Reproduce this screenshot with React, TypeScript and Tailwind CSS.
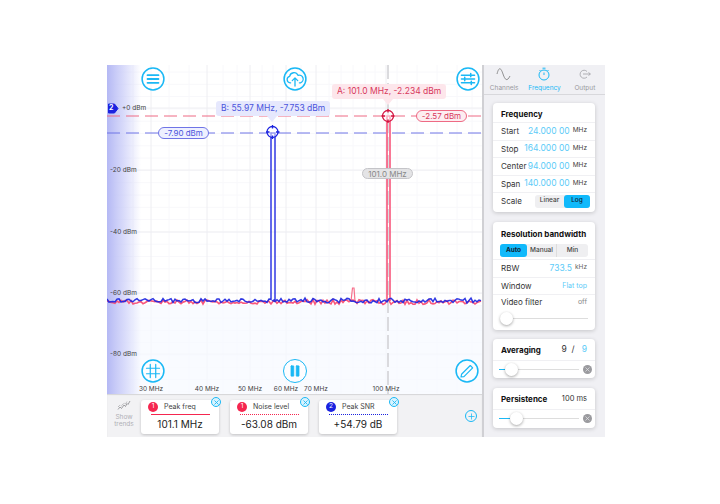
import { Pause, Plus, X } from 'lucide-react';

const CYAN = '#1ab8f5';
const RED = '#f5264f';
const BLUE = '#1a22e0';

// cheap repeatable noise for the traces
function noise(seed: number, i: number) {
  const v = Math.sin(i * 12.9898 + seed * 78.233) * 43758.5453;
  return v - Math.floor(v) - 0.5;
}

function tracePath(seed: number, base: number, peakX: number, peakY: number, peakW: number) {
  let d = '';
  for (let x = 0; x <= 375; x += 2) {
    const amp = x > 190 ? 5 : 4;
    const y = base + noise(seed, x) * amp;
    if (x === peakX) {
      d += `L${x} ${y.toFixed(1)} L${x} ${peakY} L${x + peakW} ${peakY} L${x + peakW} ${y.toFixed(1)} `;
    } else {
      d += `${d ? 'L' : 'M'}${x} ${y.toFixed(1)} `;
    }
  }
  return d;
}

const minorX = [6, 26, 62, 82, 116, 130, 155, 166, 194, 222, 234, 246, 258, 268, 290, 310, 330, 350, 365];
const majorX = [44, 100, 143, 179, 209, 279];
const majorY = [43, 105, 167, 228, 289];

function RoundButton({ left, top, children }: { left: number; top: number; children: React.ReactNode }) {
  return (
    <svg className="absolute" style={{ left, top }} width="24" height="24" viewBox="0 0 22 22" fill="none" stroke={CYAN}>
      <circle cx="11" cy="11" r="10" fill="#ffffff" fillOpacity="0.6" strokeWidth="1.4" />
      {children}
    </svg>
  );
}

function Chart() {
  return (
    <div className="relative h-[329px] w-full overflow-hidden bg-white">
      <svg className="absolute inset-0" width="375" height="329" viewBox="0 0 375 329">
        <defs>
          <linearGradient id="edge" x1="0" x2="1" y1="0" y2="0">
            <stop offset="0" stopColor="#b4b8f4" />
            <stop offset="0.45" stopColor="#c8cbf8" stopOpacity="0.75" />
            <stop offset="1" stopColor="#c8cbf8" stopOpacity="0" />
          </linearGradient>
        </defs>
        {minorX.map(x => <line key={x} x1={x} x2={x} y1="0" y2="329" stroke="#f8f8fb" strokeWidth="1" />)}
        {Array.from({ length: 32 }, (_, i) => i * 12.3 + 7).map(y => (
          <line key={y} x1="0" x2="375" y1={y} y2={y} stroke="#f8f8fb" strokeWidth="1" />
        ))}
        {majorX.map(x => <line key={x} x1={x} x2={x} y1="0" y2="329" stroke="#eeeef2" strokeWidth="1" />)}
        {majorY.map(y => <line key={y} x1="0" x2="375" y1={y} y2={y} stroke="#eeeef2" strokeWidth="1" />)}
        <rect x="0" y="240" width="375" height="89" fill="#f7f9ff" opacity="0.7" />
        <rect x="0" y="0" width="34" height="329" fill="url(#edge)" />
        <line x1="281" x2="281" y1="0" y2="329" stroke="#d0d0d4" strokeWidth="1.5" strokeDasharray="14 4" />
        <line x1="0" x2="375" y1="51" y2="51" stroke="#ee6a84" strokeWidth="1" strokeDasharray="13 6" />
        <line x1="0" x2="375" y1="68" y2="68" stroke="#6f74e6" strokeWidth="1" strokeDasharray="13 6" />
        <path d="M244 236 L245.500 223 L247 223 L248 236" fill="none" stroke="#f7708c" strokeWidth="1.2" />
        <path d={tracePath(3, 237, 280, 51, 3)} fill="none" stroke="#f8577c" strokeWidth="1.6" />
        <path d={tracePath(7, 235.5, 164, 68, 4)} fill="none" stroke={BLUE} strokeOpacity="0.9" strokeWidth="1.5" />
        <g fill="none" stroke={BLUE} strokeWidth="1.3">
          <circle cx="165.5" cy="67" r="5.5" fill="#ffffff" fillOpacity="0.5" />
          <path d="M165.5 60v3.5M165.5 70.5v3.5M159 67h3.5M169 67h3.5" />
        </g>
        <g fill="none" stroke="#d3123f" strokeWidth="1.3">
          <circle cx="281" cy="51" r="5.5" fill="#ffffff" fillOpacity="0.5" />
          <path d="M281 44v3.5M281 54.5v3.5M274.5 51h3.5M284 51h3.5" />
        </g>
        <path d="M1.5 39h6l3.5 4.5-3.5 4.500h-6z" fill={BLUE} stroke={BLUE} strokeLinejoin="round" />
      </svg>

      {[
        ['+0 dBm', 38],
        ['-20 dBm', 100],
        ['-40 dBm', 162],
        ['-60 dBm', 223],
        ['-80 dBm', 284],
      ].map(([label, top]) => (
        <span
          key={label}
          className={`absolute text-[6.5px] leading-[10px] text-[#444] ${label === '+0 dBm' ? 'left-[15px]' : 'left-[3px]'}`}
          style={{ top: Number(top) }}
        >
          {label}
        </span>
      ))}
      {[
        ['30 MHz', 44],
        ['40 MHz', 100],
        ['50 MHz', 143],
        ['60 MHz', 179],
        ['70 MHz', 209],
        ['100 MHz', 279],
      ].map(([label, left]) => (
        <span key={label} className="absolute top-[319px] -translate-x-1/2 whitespace-nowrap text-[6.5px] leading-[10px] text-[#444]" style={{ left: Number(left) }}>
          {label}
        </span>
      ))}

      <span className="absolute left-[2px] top-[38px] text-[7px] font-bold leading-[10px] text-white">2</span>

      <div className="absolute left-[109px] top-[36px] flex h-[15px] items-center whitespace-nowrap rounded-[3px] bg-[#e6e8fd] px-[5px] text-[8.5px] text-[#4a54dc]">B: 55.97 MHz, -7.753 dBm</div>
      <div className="absolute left-[160px] top-[51px] h-0 w-0 border-x-[5px] border-t-[6px] border-x-transparent border-t-[#e6e8fd]" />
      <div className="absolute left-[225px] top-[19px] flex h-[15px] items-center whitespace-nowrap rounded-[3px] bg-[#fde6eb] px-[5px] text-[8.5px] text-[#d8385c]">A: 101.0 MHz, -2.234 dBm</div>
      <div className="absolute left-[276px] top-[34px] h-0 w-0 border-x-[5px] border-t-[6px] border-x-transparent border-t-[#fde6eb]" />

      <div className="absolute left-[51px] top-[62px] flex h-[12px] w-[51px] items-center justify-center rounded-full border border-[#6f74e6] bg-[#eef0ff] text-[8px] text-[#4a54dc]">-7.90 dBm</div>
      <div className="absolute left-[309px] top-[45px] flex h-[12px] w-[51px] items-center justify-center rounded-full border border-[#ee6a84] bg-[#fdeef1] text-[8px] text-[#d8385c]">-2.57 dBm</div>
      <div className="absolute left-[255px] top-[103px] flex h-[11px] w-[51px] items-center justify-center rounded-full border border-[#c4c4c8] bg-[#e4e4e6] text-[8px] text-[#888]">101.0 MHz</div>

      <RoundButton left={34} top={2}>
        <path d="M6 7.500h10M6 11h10M6 14.500h10" strokeWidth="1.7" strokeLinecap="round" />
      </RoundButton>
      <RoundButton left={176} top={2}>
        <path d="M7 14.500H6.500a3 3 0 0 1-.4-5.900 4 4 0 0 1 7.600-1 3.200 3.200 0 0 1 2.300 6.900H15M11 17.500v-7M8.500 12.500 11 10l2.500 2.500" strokeWidth="1.200" strokeLinecap="round" strokeLinejoin="round" />
      </RoundButton>
      <RoundButton left={349} top={2}>
        <path d="M5 7.500h12M5 11h12M5 14.500h12M13.500 6v3M8 9.500v3M14 13v3" strokeWidth="1.400" strokeLinecap="round" />
      </RoundButton>
      <RoundButton left={34} top={294}>
        <path d="M8.500 5v12M13.500 5v12M5 8.500h12M5 13.500h12" strokeWidth="1.100" strokeLinecap="round" />
      </RoundButton>
      <div className="absolute left-[176px] top-[294px] flex h-[24px] w-[24px] items-center justify-center rounded-full border-[1.5px] border-[#1ab8f5] bg-white/60">
        <Pause size={14} fill={CYAN} stroke={CYAN} strokeWidth={1} />
      </div>
      <RoundButton left={348} top={294}>
        <path d="m6 14 8-8 2.200 2.200-8 8L5.500 16.500Z" strokeWidth="1.100" strokeLinejoin="round" />
      </RoundButton>
    </div>
  );
}

function MeasureCard({ num, title, value, color, dotted }: { num: string; title: string; value: string; color: string; dotted?: boolean }) {
  return (
    <div className="relative flex h-[34px] w-[78px] flex-col items-center rounded-[3px] bg-white pt-[1px] shadow-[0_1px_3px_rgba(0,0,0,0.2)]">
      <div className="flex w-full items-center pl-[7px]">
        <span className="flex h-[10px] w-[10px] items-center justify-center rounded-full text-[6.5px] text-white" style={{ backgroundColor: color }}>{num}</span>
        <span className="ml-[6px] whitespace-nowrap text-[7px] leading-[12px] text-[#444]">{title}</span>
      </div>
      <div
        className={`mt-[1px] w-[59px] border-t ${dotted ? 'border-dotted' : 'border-solid'}`}
        style={{ borderColor: color }}
      />
      <span className="mt-[3px] whitespace-nowrap text-[10px] leading-[13px] text-[#222]">{value}</span>
      <span className="absolute -right-[2px] -top-[3px] flex h-[10px] w-[10px] items-center justify-center rounded-full border border-[#1ab8f5] bg-[#d9f3fe]">
        <X size={7} stroke={CYAN} strokeWidth={3} />
      </span>
    </div>
  );
}

function BottomBar() {
  return (
    <div className="flex h-[43px] items-start bg-[#f2f2f4] pt-[6px] shadow-[inset_0_1px_1px_rgba(0,0,0,0.12)]">
      <div className="flex w-[34px] flex-col items-center">
        <svg width="14" height="11" viewBox="0 0 14 11" fill="none" stroke="#8a8a8e" strokeWidth="0.8">
          <path d="M1 9.500 3 7l1.500 1.500L7 5l1.500 1.500L10 3.500l1 1L13 1" />
          <path d="M1 7 3 5l1.500 1L7 3l1.500 1L10 1.500" strokeDasharray="1 1" />
        </svg>
        <span className="mt-[3px] text-center text-[6.5px] leading-[7px] text-[#b0b0b4]">Show<br />trends</span>
      </div>
      <div className="flex gap-[11px]">
        <MeasureCard num="1" title="Peak freq" value="101.1 MHz" color={RED} />
        <MeasureCard num="1" title="Noise level" value="-63.08 dBm" color={RED} dotted />
        <MeasureCard num="2" title="Peak SNR" value="+54.79 dB" color={BLUE} dotted />
      </div>
      <span className="ml-[68px] mt-[10px] flex h-[12px] w-[12px] items-center justify-center rounded-full border border-[#1ab8f5]">
        <Plus size={9} stroke={CYAN} strokeWidth={2} />
      </span>
    </div>
  );
}

function Row({ label, value, unit }: { label: string; value: string; unit: string }) {
  return (
    <div className="flex h-[17.5px] items-center whitespace-nowrap border-t border-[#f0f0f3] px-[8px] text-[8px] text-[#333]">
      <span className="flex-1">{label}</span>
      <span className="text-[8.5px] text-[#5ccbf8]">{value}</span>
      <span className="ml-[3px] text-[6.5px] text-[#444]">{unit}</span>
    </div>
  );
}

function Slider({ fill, thumb }: { fill: number; thumb: number }) {
  return (
    <div className="flex h-[18px] items-center border-t border-[#f0f0f3] pl-[6px] pr-[3px]">
      <div className="relative h-[1px] flex-1 bg-[#ddd]">
        <div className="absolute left-0 top-0 h-[1px] bg-[#1ab8f5]" style={{ width: fill }} />
        <div className="absolute top-[-6px] h-[13px] w-[13px] rounded-full bg-white shadow-[0_1px_3px_rgba(0,0,0,0.35)]" style={{ left: thumb }} />
      </div>
      <span className="ml-[4px] flex h-[9px] w-[9px] items-center justify-center rounded-full bg-[#9a9a9e]">
        <X size={7} stroke="#e4e4e6" strokeWidth={2.5} />
      </span>
    </div>
  );
}

function Card({ className, children }: { className: string; children: React.ReactNode }) {
  return <div className={`ml-[9px] w-[102px] rounded-[4px] bg-white shadow-[0_1px_4px_rgba(0,0,0,0.18)] ${className}`}>{children}</div>;
}

function Sidebar() {
  return (
    <div className="flex h-[372px] w-[123px] flex-col border-l-[2px] border-[#d0d0d4] bg-[#f0f0f4]">
      <div className="flex h-[30px] items-start border-b border-[#d8d8dc] pt-[2px]">
        <div className="flex flex-1 flex-col items-center text-[6.5px] text-[#9a9a9e]">
          <svg width="16" height="14" viewBox="0 0 16 14" fill="none" stroke="#777" strokeWidth="0.8">
            <path d="M1 7C3 -1 5 1 7 7s4 8 7 2" />
          </svg>
          <span className="mt-[3px]">Channels</span>
        </div>
        <div className="flex flex-1 flex-col items-center text-[6.5px] text-[#1ab8f5]">
          <svg width="14" height="14" viewBox="0 0 14 14" fill="none" stroke={CYAN} strokeWidth="1">
            <circle cx="7" cy="8" r="5" />
            <path d="M5.500 1.200h3M7 5.500V8M2.500 3l1 1M11.500 3l-1 1" />
          </svg>
          <span className="mt-[3px]">Frequency</span>
        </div>
        <div className="flex flex-1 flex-col items-center text-[6.5px] text-[#9a9a9e]">
          <svg width="16" height="14" viewBox="0 0 16 14" fill="none" stroke="#a0a0a4" strokeWidth="0.8">
            <path d="M10 4.500A4 4 0 1 0 10 10M6 7h7M11.500 5.500 13.500 7l-2 1.500" />
          </svg>
          <span className="mt-[3px]">Output</span>
        </div>
      </div>

      <Card className="mt-[8px] h-[109px]">
        <div className="flex h-[19px] items-center pl-[8px] pt-[3px] text-[8px] font-bold text-[#111]">Frequency</div>
        <Row label="Start" value="24.000 00" unit="MHz" />
        <Row label="Stop" value="164.000 00" unit="MHz" />
        <Row label="Center" value="94.000 00" unit="MHz" />
        <Row label="Span" value="140.000 00" unit="MHz" />
        <div className="flex h-[17.5px] items-center justify-between border-t border-[#f0f0f3] pl-[8px] pr-[5px] text-[8px] text-[#333]">
          <span>Scale</span>
          <div className="flex h-[13px] w-[55px] rounded-[3px] bg-[#efeff1] text-[6.5px] font-medium">
            <span className="flex w-[29px] items-center justify-center text-[#444]">Linear</span>
            <span className="flex w-[26px] items-center justify-center rounded-[3px] bg-[#10b9fb] text-[#123]">Log</span>
          </div>
        </div>
      </Card>

      <Card className="mt-[10px] h-[108px]">
        <div className="flex h-[22px] items-center whitespace-nowrap pl-[8px] pt-[1px] text-[8px] font-bold text-[#111]">Resolution bandwidth</div>
        <div className="px-[7px]">
          <div className="flex h-[13px] rounded-[3px] bg-[#efeff1] text-[6.5px] font-medium text-[#444]">
            <span className="flex w-[27px] items-center justify-center rounded-[3px] bg-[#10b9fb] font-bold text-[#123]">Auto</span>
            <span className="flex w-[30px] items-center justify-center border-r border-[#ddd]">Manual</span>
            <span className="flex flex-1 items-center justify-center">Min</span>
          </div>
        </div>
        <div className="mt-[2px] flex h-[17.5px] items-center border-t border-[#f0f0f3] px-[8px] text-[8px] text-[#333]">
          <span className="flex-1">RBW</span>
          <span className="text-[8.5px] text-[#5ccbf8]">733.5</span>
          <span className="ml-[3px] text-[6.5px] text-[#666]">kHz</span>
        </div>
        <div className="flex h-[17.5px] items-center justify-between border-t border-[#f0f0f3] px-[8px] text-[8px] text-[#333]">
          <span>Window</span>
          <span className="text-[7px] text-[#5ccbf8]">Flat top</span>
        </div>
        <div className="flex h-[15px] items-center justify-between border-t border-[#f0f0f3] px-[8px] text-[8px] text-[#333]">
          <span>Video filter</span>
          <span className="text-[7px] text-[#888]">off</span>
        </div>
        <div className="flex h-[18px] items-center px-[7px]">
          <div className="relative h-[1px] flex-1 bg-[#ddd]">
            <div className="absolute left-0 top-[-6px] h-[13px] w-[13px] rounded-full bg-white shadow-[0_1px_3px_rgba(0,0,0,0.35)]" />
          </div>
        </div>
      </Card>

      <Card className="mt-[9px] h-[39px]">
        <div className="flex h-[21px] items-center justify-between px-[8px] text-[8px] text-[#333]">
          <span className="font-bold text-[#111]">Averaging</span>
          <span className="text-[8.5px]">9&nbsp;&nbsp;/&nbsp;&nbsp;&nbsp;<span className="text-[#5ccbf8]">9</span></span>
        </div>
        <Slider fill={7} thumb={6} />
      </Card>

      <Card className="mt-[10px] h-[40px]">
        <div className="flex h-[21px] items-center justify-between px-[8px] text-[8px] text-[#333]">
          <span className="font-bold text-[#111]">Persistence</span>
          <span className="text-[7.5px]">100 ms</span>
        </div>
        <Slider fill={11} thumb={11} />
      </Card>
    </div>
  );
}

export default function App() {
  return (
    <div className="h-[504px] w-[720px] bg-white pl-[107px] pt-[65px] font-['Inter','Liberation_Sans',sans-serif]">
      <div className="flex h-[372px] w-[498px] overflow-hidden">
        <div className="flex w-[375px] flex-col">
          <Chart />
          <BottomBar />
        </div>
        <Sidebar />
      </div>
    </div>
  );
}
